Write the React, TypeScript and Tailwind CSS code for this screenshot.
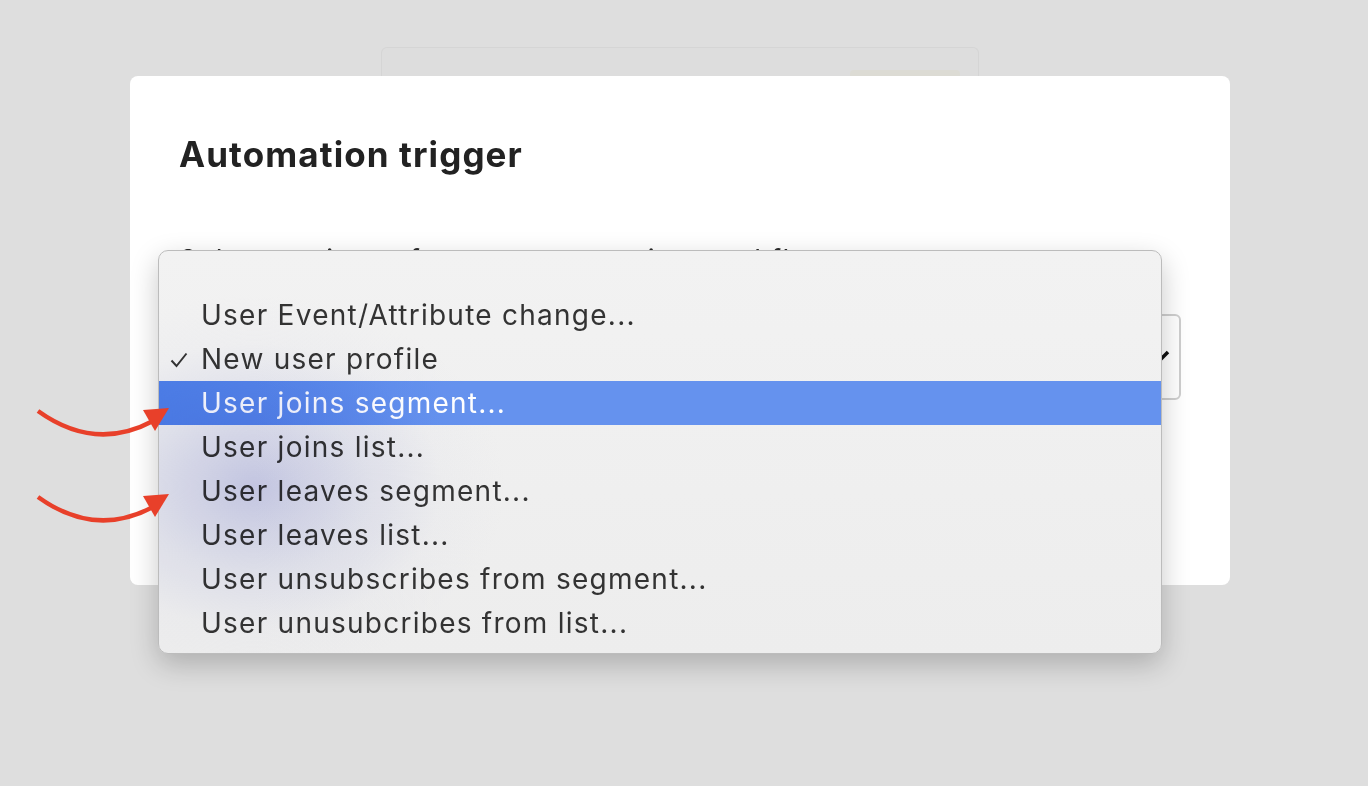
import React from "react";

const items = [
  "User Event/Attribute change...",
  "New user profile",
  "User joins segment...",
  "User joins list...",
  "User leaves segment...",
  "User leaves list...",
  "User unsubscribes from segment...",
  "User unusubcribes from list...",
];

function Arrow() {
  return (
    <svg width="140" height="40" viewBox="0 0 140 40" className="block">
      <path d="M3 4 Q 60 45 118 14" fill="none" stroke="#e8402a" strokeWidth="4.5" strokeLinecap="butt" />
      <polygon points="108,3 134,1 120,24" fill="#e8402a" />
    </svg>
  );
}

export default function App() {
  return (
    <div
      className="relative w-[1368px] h-[786px] overflow-hidden bg-[#dedede]"
      style={{ fontFamily: "Inter, 'Noto Sans', sans-serif" }}
    >
      <div className="pt-[47px] pl-[130px]">
        {/* back card */}
        <div className="ml-[251px] w-[598px] h-[29px] rounded-t-[6px] border border-b-0 border-[#d5d5d5] bg-[#dddddd] flex justify-end items-end pr-[18px]">
          <div className="w-[110px] h-[6px] rounded-t-[4px] bg-[#dcdbd4]" />
        </div>
        {/* modal */}
        <div className="relative w-[1100px] h-[509px] rounded-[8px] bg-white px-[49px] pt-[58px]">
          <h1 className="text-[35px] leading-[40px] font-bold text-[#222222] tracking-[1.1px]">
            Automation trigger
          </h1>
          <p className="mt-[70px] text-[28px] leading-[32px] text-[#2b2b2b] tracking-[1.2px]">
            Select a trigger for your automation workflow
          </p>
          <div className="mt-[38px] h-[86px] rounded-[6px] border-2 border-[#cfcfcf] flex items-center justify-end pr-[8px]">
            <svg width="22" height="14" viewBox="0 0 22 14">
              <path d="M2 3 L10 11 L19 2" fill="none" stroke="#111" strokeWidth="3.5" />
            </svg>
          </div>

          {/* dropdown menu */}
          <div className="absolute left-[28px] top-[174px] w-[1004px] h-[404px] rounded-[10px] border border-[#bcbcbc] bg-[linear-gradient(180deg,#f2f2f2,#ededed)] shadow-[0_10px_28px_rgba(0,0,0,0.22)] pt-[42px] pb-[8px] overflow-hidden">
            {items.map((t, i) => {
              const active = i === 2;
              return (
                <div
                  key={t}
                  className={
                    "relative h-[44px] flex items-center pl-[42px] text-[28px] tracking-[1.25px] " +
                    (active
                      ? "bg-[linear-gradient(90deg,#4e80e8,#6592ee_28%,#6592ee)] text-white"
                      : "text-[#333333]")
                  }
                >
                  {i === 1 && (
                    <svg width="18" height="16" viewBox="0 0 18 16" className="absolute left-[11px] top-[15px]">
                      <path d="M1.5 8.5 L6.5 14 L16.5 1.5" fill="none" stroke="#333" strokeWidth="2" />
                    </svg>
                  )}
                  {t}
                </div>
              );
            })}
            <div className="pointer-events-none absolute inset-0 mix-blend-multiply bg-[radial-gradient(ellipse_250px_190px_at_95px_235px,rgba(200,203,238,0.85),rgba(215,218,242,0.45)_45%,rgba(235,236,248,0.15)_75%,transparent_100%)]" />
          </div>
        </div>
      </div>

      {/* annotation arrows */}
      <div className="absolute left-[35px] top-[407px]">
        <Arrow />
      </div>
      <div className="absolute left-[35px] top-[493px]">
        <Arrow />
      </div>
    </div>
  );
}
